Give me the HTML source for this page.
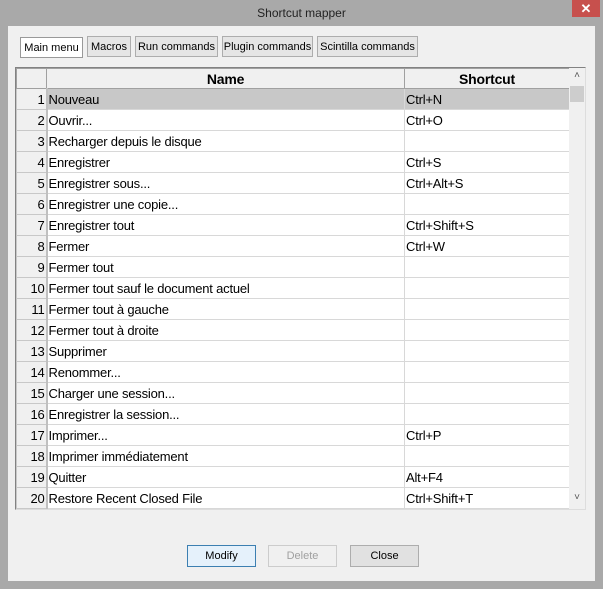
<!DOCTYPE html><html><head><style>
body{margin:0;width:603px;height:589px;background:#a9a9a9;font-family:"Liberation Sans",sans-serif;position:relative;overflow:hidden}
.a{position:absolute}
.title{left:0;top:0;width:603px;height:26px;text-align:center;font-size:12px;line-height:26px;color:#222}
.x{left:572px;top:0;width:28px;height:17px;background:#c7504d;color:#fff;text-align:center;font-size:13px;line-height:17px;font-weight:bold}
.client{left:8px;top:26px;width:587px;height:555px;background:#f0f0f0}
.tab{top:36px;height:19px;border:1px solid #adadad;background:#e5e5e5;font-size:11px;line-height:20px;text-align:center;color:#000}
.grid{left:15px;top:67px;width:569px;height:441px;border:1px solid #828282;border-right-color:#ddd;border-bottom-color:#ddd;background:#fff;overflow:hidden}
table{border-collapse:collapse;position:absolute;left:0;top:0;width:553px;table-layout:fixed}
td{height:20px;border:1px solid #d8d8d8;padding:0 1px;font-size:13px;white-space:nowrap;overflow:hidden;letter-spacing:-0.2px}
td.n{background:#f0f0f0;text-align:right;border-color:#c8c8c8;border-right:2px solid #c0c0c0}
tr.h td{background:#f0f0f0;font-weight:bold;text-align:center;font-size:14px;border:1px solid #a0a0a0;height:19px}
tr.s td{background:#c8c8c8}
tr.s td.n{background:#f0f0f0}
.sb{left:553px;top:0;width:16px;height:441px;background:#f0f0f0}
.btn{top:545px;height:20px;border:1px solid #adadad;background:#e1e1e1;font-size:11px;line-height:21px;text-align:center}
</style></head><body>
<div class="a title">Shortcut mapper</div>
<div class="a x">✕</div>
<div class="a client"></div>
<div class="a tab" style="left:20px;width:61px;background:#fff;top:37px;height:19px;border-color:#999">Main menu</div>
<div class="a tab" style="left:87px;width:42px">Macros</div>
<div class="a tab" style="left:135px;width:81px">Run commands</div>
<div class="a tab" style="left:222px;width:89px">Plugin commands</div>
<div class="a tab" style="left:317px;width:99px">Scintilla commands</div>
<div class="a grid">
<table>
<colgroup><col style="width:30px"><col style="width:358px"><col style="width:165px"></colgroup>
<tr class="h"><td class="n"></td><td>Name</td><td>Shortcut</td></tr>
<tr class="s"><td class="n">1</td><td>Nouveau</td><td>Ctrl+N</td></tr>
<tr><td class="n">2</td><td>Ouvrir...</td><td>Ctrl+O</td></tr>
<tr><td class="n">3</td><td>Recharger depuis le disque</td><td></td></tr>
<tr><td class="n">4</td><td>Enregistrer</td><td>Ctrl+S</td></tr>
<tr><td class="n">5</td><td>Enregistrer sous...</td><td>Ctrl+Alt+S</td></tr>
<tr><td class="n">6</td><td>Enregistrer une copie...</td><td></td></tr>
<tr><td class="n">7</td><td>Enregistrer tout</td><td>Ctrl+Shift+S</td></tr>
<tr><td class="n">8</td><td>Fermer</td><td>Ctrl+W</td></tr>
<tr><td class="n">9</td><td>Fermer tout</td><td></td></tr>
<tr><td class="n">10</td><td>Fermer tout sauf le document actuel</td><td></td></tr>
<tr><td class="n">11</td><td>Fermer tout à gauche</td><td></td></tr>
<tr><td class="n">12</td><td>Fermer tout à droite</td><td></td></tr>
<tr><td class="n">13</td><td>Supprimer</td><td></td></tr>
<tr><td class="n">14</td><td>Renommer...</td><td></td></tr>
<tr><td class="n">15</td><td>Charger une session...</td><td></td></tr>
<tr><td class="n">16</td><td>Enregistrer la session...</td><td></td></tr>
<tr><td class="n">17</td><td>Imprimer...</td><td>Ctrl+P</td></tr>
<tr><td class="n">18</td><td>Imprimer immédiatement</td><td></td></tr>
<tr><td class="n">19</td><td>Quitter</td><td>Alt+F4</td></tr>
<tr><td class="n">20</td><td>Restore Recent Closed File</td><td>Ctrl+Shift+T</td></tr>
</table>
<div class="a sb"><div class="a" style="left:0;top:2px;width:16px;text-align:center;font-size:10px;color:#555">˄</div><div class="a" style="left:1px;top:18px;width:14px;height:16px;background:#cdcdcd"></div><div class="a" style="left:0;top:424px;width:16px;text-align:center;font-size:10px;color:#555">˅</div></div>
</div>
<div class="a btn" style="left:187px;width:67px;border-color:#3c7fb1;background:#e5f1fb">Modify</div>
<div class="a btn" style="left:268px;width:67px;color:#a0a0a0;background:#f0f0f0;border-color:#ccc">Delete</div>
<div class="a btn" style="left:350px;width:67px">Close</div>
</body></html>
